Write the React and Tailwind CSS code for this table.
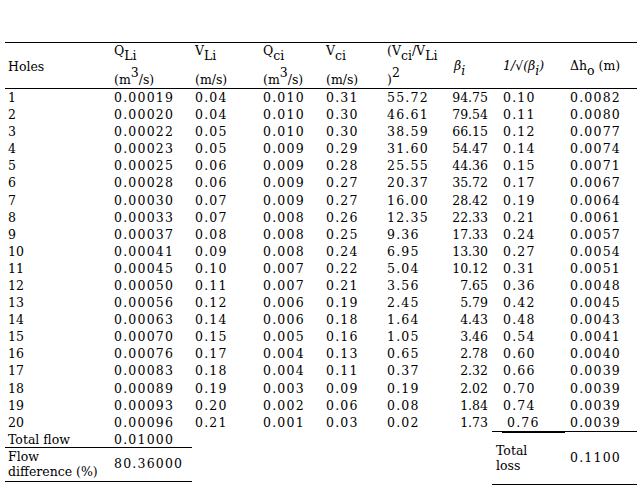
import React from "react";

const rows = [
  ["1", "0.00019", "0.04", "0.010", "0.31", "55.72", "94.75", "0.10", "0.0082"],
  ["2", "0.00020", "0.04", "0.010", "0.30", "46.61", "79.54", "0.11", "0.0080"],
  ["3", "0.00022", "0.05", "0.010", "0.30", "38.59", "66.15", "0.12", "0.0077"],
  ["4", "0.00023", "0.05", "0.009", "0.29", "31.60", "54.47", "0.14", "0.0074"],
  ["5", "0.00025", "0.06", "0.009", "0.28", "25.55", "44.36", "0.15", "0.0071"],
  ["6", "0.00028", "0.06", "0.009", "0.27", "20.37", "35.72", "0.17", "0.0067"],
  ["7", "0.00030", "0.07", "0.009", "0.27", "16.00", "28.42", "0.19", "0.0064"],
  ["8", "0.00033", "0.07", "0.008", "0.26", "12.35", "22.33", "0.21", "0.0061"],
  ["9", "0.00037", "0.08", "0.008", "0.25", "9.36", "17.33", "0.24", "0.0057"],
  ["10", "0.00041", "0.09", "0.008", "0.24", "6.95", "13.30", "0.27", "0.0054"],
  ["11", "0.00045", "0.10", "0.007", "0.22", "5.04", "10.12", "0.31", "0.0051"],
  ["12", "0.00050", "0.11", "0.007", "0.21", "3.56", "7.65", "0.36", "0.0048"],
  ["13", "0.00056", "0.12", "0.006", "0.19", "2.45", "5.79", "0.42", "0.0045"],
  ["14", "0.00063", "0.14", "0.006", "0.18", "1.64", "4.43", "0.48", "0.0043"],
  ["15", "0.00070", "0.15", "0.005", "0.16", "1.05", "3.46", "0.54", "0.0041"],
  ["16", "0.00076", "0.17", "0.004", "0.13", "0.65", "2.78", "0.60", "0.0040"],
  ["17", "0.00083", "0.18", "0.004", "0.11", "0.37", "2.32", "0.66", "0.0039"],
  ["18", "0.00089", "0.19", "0.003", "0.09", "0.19", "2.02", "0.70", "0.0039"],
  ["19", "0.00093", "0.20", "0.002", "0.06", "0.08", "1.84", "0.74", "0.0039"],
  ["20", "0.00096", "0.21", "0.001", "0.03", "0.02", "1.73", "0.76", "0.0039"],
];

const widths = ["w-[106px]", "w-[81px]", "w-[68px]", "w-[63px]", "w-[61px]", "w-[67px]", "w-[49px]", "w-[67px]", "w-[70px]"];

// sub/sup at full size, just shifted like the original
const Sub = ({ children }) => <sub className="text-[12.5px] bottom-[-5px]">{children}</sub>;
const Sup = ({ children }) => <sup className="text-[12.5px] top-[-7px]">{children}</sup>;

const TwoLine = ({ top, bottom }) => (
  <div>
    <div className="h-[16px] leading-[16px] whitespace-nowrap">{top}</div>
    <div className="mt-[13px] h-[16px] leading-[16px] whitespace-nowrap">{bottom}</div>
  </div>
);

export default function App() {
  return (
    <div className="w-[640px] h-[504px] bg-white text-black text-[12.5px] pt-[42px] pl-[5px]" style={{ fontFamily: '"DejaVu Serif", serif' }}>
      <table className="table-fixed border-collapse w-[632px]">
        <colgroup>
          {widths.map((w, i) => (
            <col key={i} className={w} />
          ))}
        </colgroup>
        <thead>
          <tr className="h-[46px] border-t border-b border-black text-left text-[12.5px]">
            <th className="font-normal align-middle pl-[3px] pt-[4px]">Holes</th>
            <th className="font-normal align-top pl-[3px]">
              <TwoLine top={<>Q<Sub>Li</Sub></>} bottom={<>(m<Sup>3</Sup>/s)</>} />
            </th>
            <th className="font-normal align-top pl-[3px]">
              <TwoLine top={<>V<Sub>Li</Sub></>} bottom="(m/s)" />
            </th>
            <th className="font-normal align-top pl-[3px]">
              <TwoLine top={<>Q<Sub>ci</Sub></>} bottom={<>(m<Sup>3</Sup>/s)</>} />
            </th>
            <th className="font-normal align-top pl-[3px]">
              <TwoLine top={<>V<Sub>ci</Sub></>} bottom="(m/s)" />
            </th>
            <th className="font-normal align-top pl-[3px]">
              <TwoLine top={<>(V<Sub>ci</Sub>/V<Sub>Li</Sub></>} bottom={<>)<Sup>2</Sup></>} />
            </th>
            <th className="font-normal align-middle pl-[3px] pt-[2px] italic">
              β<Sub>i</Sub>
            </th>
            <th className="font-normal align-middle pl-[3px] pt-[2px] italic whitespace-nowrap">
              1/√(β<Sub>i</Sub>)
            </th>
            <th className="font-normal align-middle pl-[3px] pt-[2px] whitespace-nowrap">
              Δh<Sub>o</Sub> (m)
            </th>
          </tr>
        </thead>
        <tbody>
          {rows.map((r) => (
            <tr key={r[0]} className="h-[17.1px] leading-[17px]">
              <td className="pl-[3px] p-0">{r[0]}</td>
              <td className="pl-[3px] tracking-[1.2px]">{r[1]}</td>
              <td className="pl-[3px] tracking-[1.2px]">{r[2]}</td>
              <td className="pl-[3px] tracking-[1.2px]">{r[3]}</td>
              <td className="pl-[3px] tracking-[1.2px]">{r[4]}</td>
              <td className="pl-[3px] tracking-[1.2px]">{r[5]}</td>
              <td className="pr-[12px] text-right">{r[6]}</td>
              <td className={`${r[0] === "20" ? "pl-[7px]" : "pl-[3px]"} tracking-[1.2px]`}>{r[7]}</td>
              <td className="pl-[3px] tracking-[1.2px]">{r[8]}</td>
            </tr>
          ))}
        </tbody>
      </table>

      {/* footer: totals */}
      <div className="flex w-[632px]">
        <div className="w-[187px]">
          <div className="flex h-[17px] leading-[17px] border-b border-black">
            <div className="w-[106px] pl-[3px]">Total flow</div>
            <div className="pl-[3px] tracking-[1.2px]">0.01000</div>
          </div>
          <div className="flex items-center h-[34px] border-b border-black">
            <div className="w-[106px] pl-[3px] leading-[15px]">
              <div>Flow</div>
              <div>difference (%)</div>
            </div>
            <div className="pl-[3px] tracking-[1.2px]">80.36000</div>
          </div>
        </div>
        <div className="ml-auto w-[145px] h-[54px] border-t border-b border-black">
          <div className="ml-[10px] -mt-[1px] w-[63px] h-[2px] bg-black" />
          <div className="flex items-center h-[51px]">
            <div className="w-[75px] pl-[4px] leading-[15px]">
              <div>Total</div>
              <div>loss</div>
            </div>
            <div className="pl-[3px] tracking-[1.2px]">0.1100</div>
          </div>
        </div>
      </div>
    </div>
  );
}
